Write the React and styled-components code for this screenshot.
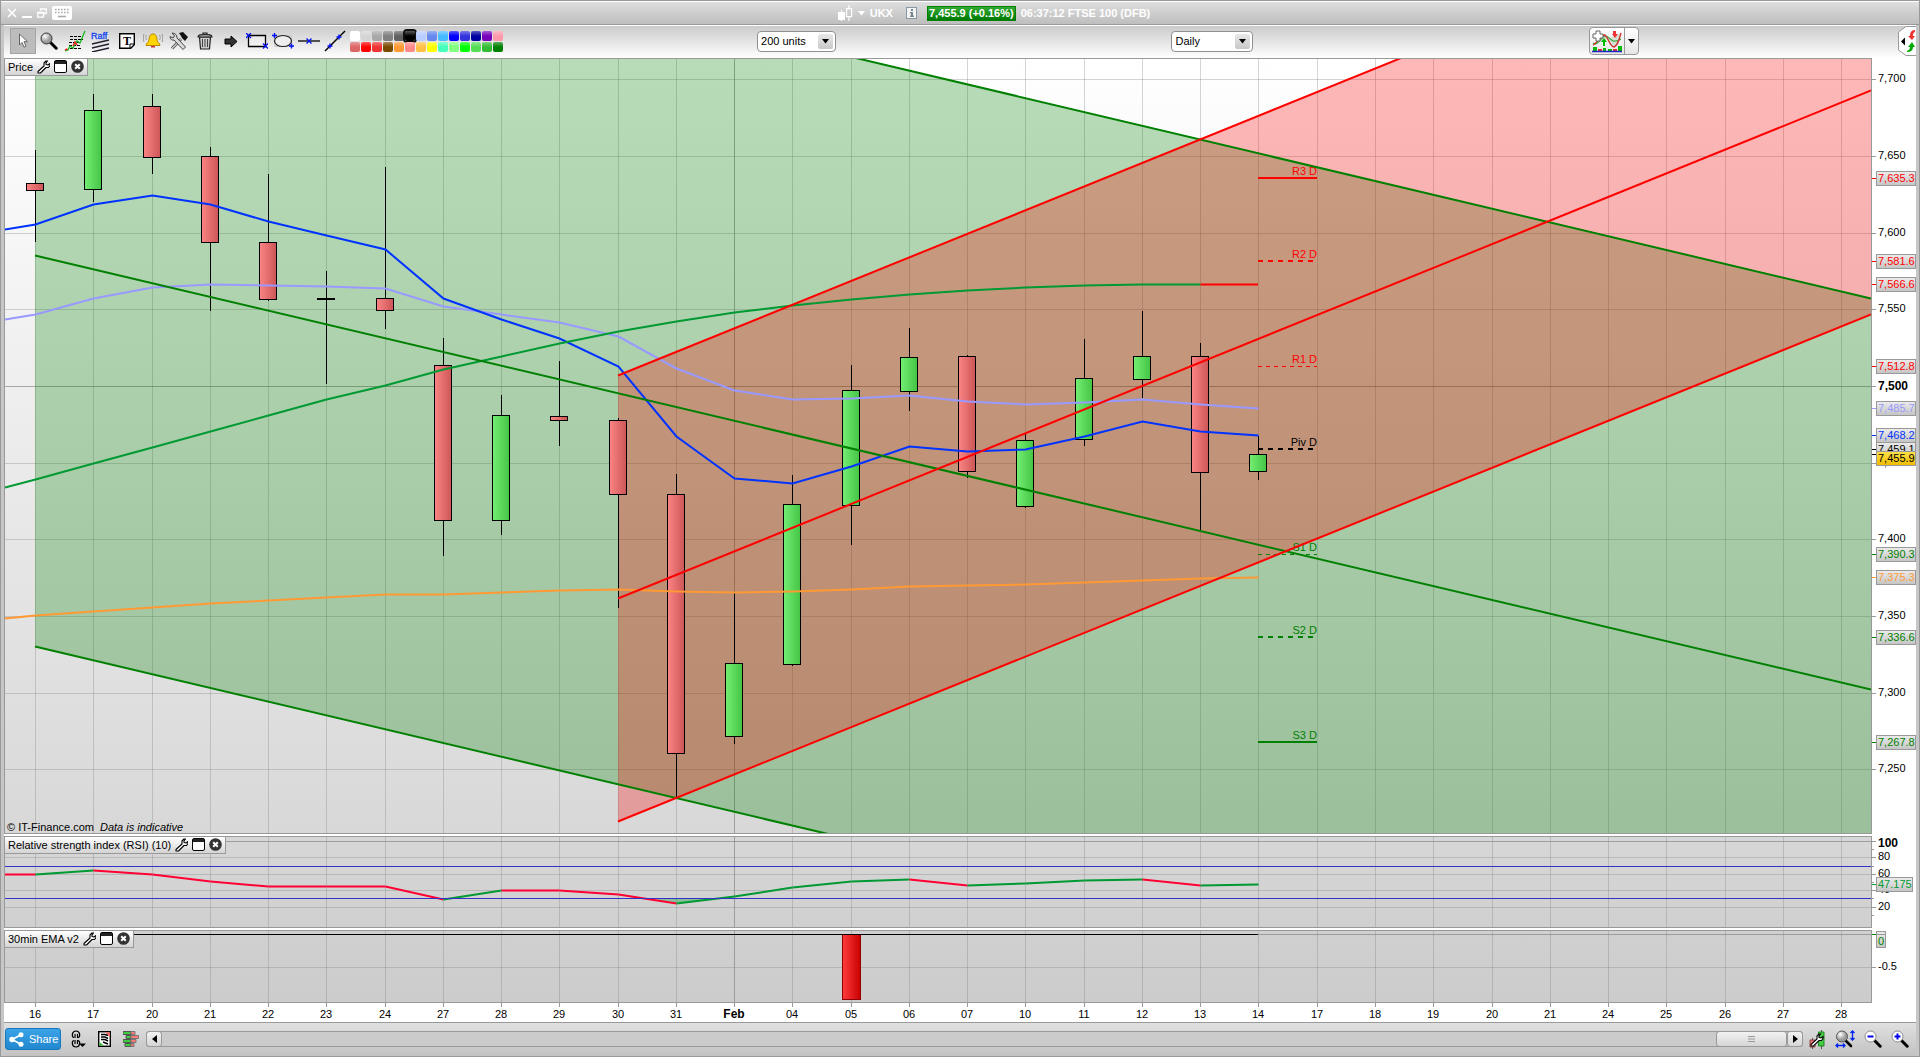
import React, { useLayoutEffect, useRef, useState } from "react";
import styled, { createGlobalStyle, css } from "styled-components";

const GlobalStyle = createGlobalStyle`
  * { box-sizing: border-box; }
  body {
    margin: 0;
    font-family: "Liberation Sans", Arial, Helvetica, sans-serif;
    font-size: 11px;
    color: #000;
  }
  button, select { font: inherit; color: inherit; }
`;

/* ---------- data ---------- */

const DAYS = [
  "16", "17", "20", "21", "22", "23", "24", "27", "28", "29", "30", "31", "Feb",
  "04", "05", "06", "07", "10", "11", "12", "13", "14", "17", "18", "19", "20",
  "21", "24", "25", "26", "27", "28",
];
const MONTH_START = 12;
const LAST_BAR = 21;

/* Vertical positions are kept on a 1057-high layout; each plot subtracts its own top. */
const PRICE = { top: 59, height: 774 };
const RSI = { top: 837, height: 90 };
const EMA = { top: 931, height: 71 };
const BASE_WIDTH = 1866;
const FIRST_DAY = 30;
const DAY_STEP = 58.26;

/* high, body top, body bottom, low, rising */
const CANDLES = [
  [150, 183, 191, 242, 0], [94, 110, 190, 202, 1], [94, 106, 158, 174, 0],
  [147, 156, 243, 311, 0], [174, 242, 300, 301, 0], [271, 298, 300, 384, 0],
  [167, 298, 311, 329, 0], [338, 365, 521, 556, 0], [395, 415, 521, 535, 1],
  [361, 416, 421, 446, 0], [418, 420, 495, 608, 0], [474, 494, 754, 798, 0],
  [593, 663, 737, 744, 1], [475, 504, 665, 666, 1], [365, 390, 506, 545, 1],
  [328, 357, 392, 411, 1], [355, 356, 472, 478, 0], [434, 440, 507, 508, 1],
  [339, 378, 440, 446, 1], [311, 356, 380, 398, 1], [343, 356, 473, 530, 0],
  [436, 454, 472, 480, 1],
];

/* The first value of every series sits on the left edge of the plot. */
const FAST_MA = [229, 224, 204, 195, 204, 221, 235, 249, 298, 319, 338, 366, 436, 478, 483, 466, 446, 451, 449, 436, 421, 431, 435];
const MID_MA = [319, 314, 298, 287, 284, 285, 286, 288, 306, 314, 322, 336, 368, 390, 399, 398, 395, 401, 404, 402, 399, 404, 408];
const SLOW_MA = [487, 479, 463, 447, 431, 415, 399, 385, 369, 356, 343, 331, 321, 312, 305, 299, 294, 290, 287, 285, 284, 284];
const LONG_MA = [618, 615, 611, 607, 603, 600, 597, 594, 594, 592, 590, 589, 591, 592, 591, 589, 586, 585, 584, 582, 580, 578, 577];
const RSI_LINE = [874, 874, 870, 874, 881, 886, 886, 886, 899, 890, 890, 894, 903, 896, 887, 881, 879, 885, 883, 880, 879, 885, 884];

const PRICE_GRID = [
  ["7,700", 79], ["7,650", 156], ["7,600", 233], ["7,550", 309], ["7,500", 386],
  ["7,450", 463], ["7,400", 539], ["7,350", 616], ["7,300", 693], ["7,250", 769],
];

const PIVOTS = [
  ["R3 D", 178, "#f00", 2, null], ["R2 D", 261, "#f00", 2, "5 5"],
  ["R1 D", 366, "#f00", 1, "4 4"], ["Piv D", 449, "#000", 2, "5 5"],
  ["S1 D", 554, "#008000", 1, "4 4"], ["S2 D", 637, "#008000", 2, "5 5"],
  ["S3 D", 742, "#008000", 2, null],
];

/* text, tick position, colour, box centre */
const TAGS = [
  ["7,635.3", 178, "#f00"], ["7,581.6", 261, "#f00"], ["7,566.6", 284, "#f00"],
  ["7,512.8", 366, "#f00"], ["7,485.7", 408, "#9999ff"], ["7,468.2", 435, "#0033ff"],
  ["7,459.1", 449, "#000"], ["7,455.9", 454, "#000", 458, "url(#gold)"],
  ["7,390.3", 554, "#008000"], ["7,375.3", 577, "#ff9933"],
  ["7,336.6", 637, "#008000"], ["7,267.8", 742, "#008000"],
];

const PALETTE = [
  "#ffffff", "#d4d4d4", "#a8a8a8", "#808080", "#606060", "#000000", "#b8ccff",
  "#6688ee", "#44bbff", "#0000ff", "#3333dd", "#0000a0", "#7700bb", "#ff99aa",
  "#dd6666", "#ff0000", "#ee3333", "#7a4a00", "#ff9933", "#ff8888", "#ffc044",
  "#ffff00", "#44ffbb", "#80ff80", "#00ff00", "#55dd55", "#33bb33", "#008000",
];

/* ---------- frame ---------- */

const Window = styled.div`
  display: flex;
  flex-direction: column;
  height: 100vh;
  border: 1px solid #999;
  background: #c6c6c6;
`;

const TitleBar = styled.header`
  display: flex;
  align-items: center;
  flex: 0 0 24px;
  padding: 0 3px 0 6px;
  border-top: 1px solid #fff;
  border-bottom: 1px solid #999;
  background: linear-gradient(#dedede, #bebebe);
  color: #fff;
  font-weight: bold;
`;

const WindowControls = styled.div`
  display: flex;
  align-items: center;
  gap: 5px;
`;

const PlainButton = styled.button`
  display: flex;
  align-items: center;
  justify-content: center;
  padding: 0;
  border: 0;
  background: none;
`;

const Spacer = styled.div`
  flex: ${(p) => p.$grow} 1 0;
`;

const Quote = styled.div`
  display: flex;
  align-items: center;
  white-space: nowrap;
`;

const SymbolMenu = styled(PlainButton)`
  margin-left: 4px;
`;

const Symbol = styled.span`
  margin: 0 13px 0 5px;
`;

const QuoteChange = styled.span`
  margin: 0 5px 0 10px;
  padding: 0 1px;
  border: 1px solid #008000;
  background: linear-gradient(#33aa33, #007a00);
  line-height: 13px;
`;

const Inner = styled.div`
  display: flex;
  flex: 1;
  flex-direction: column;
  min-height: 0;
  margin: 0 3px;
  background: #fff;
`;

/* ---------- toolbar ---------- */

const Toolbar = styled.div`
  display: flex;
  align-items: center;
  flex: none;
  height: 33px;
  padding: 0 0 2px 6px;
  border-top: 1px solid #fff;
  background: linear-gradient(#cbcbcb, #fff);
`;

const Tools = styled.div`
  display: flex;
`;

const ToolButton = styled(PlainButton)`
  width: 26px;
  height: 26px;
  ${(p) =>
    p.$active &&
    css`
      border: 1px solid #a4a4a4;
      background: #bcbcbc;
    `}
`;

const Palette = styled.div`
  display: grid;
  grid-template-columns: repeat(14, 10px);
  gap: 1px;
  margin-left: 2px;
`;

const Swatch = styled.button`
  height: 10px;
  padding: 0;
  border: 0;
  border-radius: 2px;
  background: linear-gradient(rgba(255, 255, 255, 0.35), rgba(255, 255, 255, 0) 50%), ${(p) => p.$color};
  ${(p) => p.$selected && css`outline: 2px solid #111;`}
`;

const SelectBox = styled.label`
  position: relative;
  width: ${(p) => p.$width}px;
`;

const Select = styled.select`
  display: block;
  width: 100%;
  height: 21px;
  padding: 0 3px;
  border: 1px solid #909090;
  border-radius: 4px;
  background: #fff;
  appearance: none;
`;

const SelectArrow = styled.span`
  position: absolute;
  top: 3px;
  right: 3px;
  display: flex;
  align-items: center;
  justify-content: center;
  width: 15px;
  height: 15px;
  border-radius: 2px;
  background: linear-gradient(#e8e8e8, #c8c8c8);
  pointer-events: none;
`;

const SplitButton = styled.div`
  display: flex;
  height: 28px;
  border: 1px solid #999;
  border-radius: 4px;
  background: linear-gradient(#fff, #e6e6e6);
`;

const SplitMain = styled(PlainButton)`
  width: 34px;
`;

const SplitArrow = styled(PlainButton)`
  width: 14px;
  border-left: 1px solid #999;
`;

const SideTab = styled(PlainButton)`
  width: 18px;
  height: 30px;
`;

/* ---------- panels ---------- */

const Charts = styled.main`
  display: flex;
  flex: 1;
  flex-direction: column;
  gap: 2px;
  min-height: 0;
`;

const PanelRow = styled.section`
  display: flex;
  flex: ${(p) => (p.$height ? `0 0 ${p.$height}px` : "1 1 0")};
  min-height: 0;
`;

const PlotBox = styled.div`
  position: relative;
  flex: 1;
  min-width: 0;
  border: 1px solid #999;
  background: linear-gradient(${(p) => p.$from}, ${(p) => p.$to});
  overflow: hidden;
`;

const AxisBox = styled.div`
  flex: 0 0 44px;
  padding: 1px 0;
`;

const ChartSvg = styled.svg`
  display: block;
  width: 100%;
  height: 100%;
  overflow: visible;
`;

const Caption = styled.div`
  position: absolute;
  top: 0;
  left: 0;
  display: flex;
  align-items: center;
  gap: 4px;
  height: 17px;
  padding: 0 3px 1px;
  border: solid #999;
  border-width: 0 1px 1px 0;
  background: linear-gradient(#fff, #d4d4d4);
  white-space: nowrap;
`;

const Copyright = styled.div`
  position: absolute;
  bottom: 0;
  left: 2px;
  line-height: 12px;
`;

const Note = styled.em`
  margin-left: 6px;
`;

const DateAxis = styled.div`
  flex: none;
  height: 19px;
  margin-right: 44px;
  padding: 0 1px;
`;

/* ---------- footer ---------- */

const Footer = styled.footer`
  display: flex;
  align-items: center;
  flex: 0 0 34px;
  padding: 0 7px 1px 1px;
  border-top: 1px solid #999;
  background: linear-gradient(#e0e0e0, #c2c2c2);
`;

const ShareButton = styled.button`
  display: flex;
  align-items: center;
  gap: 5px;
  height: 22px;
  padding: 0 2px 0 3px;
  border: 1px solid #1878bb;
  border-radius: 3px;
  background: linear-gradient(#3ba3e8, #2187cf);
  color: #fff;
`;

const FooterTools = styled.div`
  display: flex;
  align-items: center;
  gap: ${(p) => p.$gap}px;
  padding: 0 7px 0 ${(p) => p.$left}px;
`;

const ScrollBar = styled.div`
  display: flex;
  flex: 1;
  height: 16px;
  border: 1px solid #999;
  border-radius: 3px;
  background: #cbcbcb;
`;

const ScrollPart = styled(PlainButton)`
  width: ${(p) => p.$width}px;
  border-radius: 3px;
  background: linear-gradient(#f2f2f2, #d6d6d6);
  box-shadow: 0 0 0 1px #999;
`;

const ScrollThumb = styled(ScrollPart)`
  margin-right: 2px;
`;

const ZoomTools = styled.div`
  display: flex;
  align-items: center;
  gap: 9px;
  padding-left: 6px;
`;

/* ---------- icons ---------- */

const Icon = ({ w, h = w, children, ...rest }) => (
  <svg width={w} height={h} viewBox={`0 0 ${w} ${h}`} aria-hidden="true" {...rest}>
    {children}
  </svg>
);

const DownArrow = ({ color = "#000" }) => (
  <Icon w={7} h={5}>
    <path d="M0 0h7L3.500 4.500z" fill={color} />
  </Icon>
);

const WRENCH = "M9 1l-2 2v3L1 11.500V13h2.500L9 7.500h2.500l1.500-2V3.500L11 5 9 4.500V3l1.500-2z";

const WrenchIcon = () => (
  <Icon w={13} h={14}>
    <path d={WRENCH} fill="#fff" stroke="#000" strokeWidth="1.100" strokeLinejoin="round" />
  </Icon>
);

const WindowIcon = () => (
  <Icon w={13}>
    <rect x=".5" y=".5" width="12" height="12" rx="1.500" fill="#fff" stroke="#000" />
    <path d="M1 1h11v3H1z" fill="#222" />
  </Icon>
);

const CloseIcon = () => (
  <Icon w={13}>
    <circle cx="6.500" cy="6.500" r="6.300" fill="#333" />
    <path d="M4.200 4.200l4.600 4.600M8.800 4.200L4.200 8.800" stroke="#fff" strokeWidth="2" />
  </Icon>
);

const Lens = ({ sign }) => (
  <Icon w={18}>
    <path d="M10 10l6.200 6.200" stroke="#000" strokeWidth="3" strokeLinecap="round" />
    <circle cx="6.500" cy="6.500" r="5.500" fill={sign ? "#fff" : "url(#lens)"} stroke={sign ? "#888" : "#333"} />
    {sign && <path d={sign} stroke="#0000ee" strokeWidth="2" />}
  </Icon>
);

const MARK = (x, y) => `M${x - 2.5} ${y - 2.5}l5 5M${x + 2.5} ${y - 2.5}l-5 5`;
const CROSS = (x, y) => `M${x - 2.5} ${y}h5M${x} ${y - 2.5}v5`;

const TOOL_ICONS = [
  ["Select", <Icon w={12} h={16} key="i"><path d="M2.500 1v11l2.500-2.500 2 4.700 2-1-2-4.500h3.500z" fill="#fff" stroke="#666" /></Icon>],
  ["Zoom", <Lens key="i" />],
  ["Studies", (
    <Icon w={22} key="i">
      <path d="M6 6.500h12M6 9.500h13M5 12.500h11M5 15.500h12M6 18.500h12" stroke="#000" strokeWidth="1.200" strokeDasharray="3 1" />
      <path d="M1 21l3-1 2-4 3 2 4-7 3 2 5-12" stroke="#11bb22" strokeWidth="1.300" fill="none" />
      <path d="M1 20l2.500-1M9 16l2-4 2 3" stroke="#e22" strokeWidth="1.500" fill="none" />
    </Icon>
  )],
  ["Raff", (
    <Icon w={20} h={22} key="i">
      <text x="0" y="9" fontSize="9" fill="#1144ee" stroke="#1144ee" strokeWidth=".3">Raff</text>
      <path d="M1 14l17-4M1 18l17-4M1 22l17-4" stroke="#223" strokeWidth="1.300" />
    </Icon>
  )],
  ["Text", (
    <Icon w={16} key="i">
      <path d="M.7.7h14.600v11l-3.600 3.600H.7z" fill="#fff" stroke="#000" strokeWidth="1.400" />
      <path d="M11 15v-4h4" fill="none" stroke="#000" />
      <text x="8" y="12" fontSize="12" fontWeight="bold" textAnchor="middle" fontFamily="Liberation Serif, serif">T</text>
    </Icon>
  )],
  ["Alert", (
    <Icon w={20} h={16} key="i">
      <path d="M10 1c-3 0-4 3-4 6 0 2-3 3-3 5.500h14C17 10 14 9 14 7c0-3-1-6-4-6z" fill="#ffd400" stroke="#b88600" />
      <path d="M8 13h4v1.500H8z" fill="#c33" />
      <path d="M3.500 2C2.500 4 2.500 5 3.500 7M1 1C0 4 0 6 1 9M16.500 2c1 2 1 3 0 5M19 1c1 3 1 5 0 8" stroke="#999" fill="none" />
    </Icon>
  )],
  ["Settings", (
    <Icon w={20} h={18} key="i">
      <path d="M3 16.500L12 7" stroke="#555" strokeWidth="3" />
      <path d="M3 16.500L12 7" stroke="#ccc" strokeWidth="1.200" />
      <path d="M3 1l2.500 3-1.500 2L1 4.500c0 3 2 4 4 3.500l9 9.500 2.500-2.500-8.500-9C8 3 6 1 3 1z" fill="#ddd" stroke="#444" />
      <path d="M10 1l4-1 5 5-3 4-3-3-1-2z" fill="#111" />
    </Icon>
  )],
  ["Delete", (
    <Icon w={16} h={18} key="i">
      <path d="M2.500 5h11l-1 12h-9z" fill="#ccc" stroke="#222" strokeWidth="1.200" />
      <path d="M1 5C1 2.500 4 2.500 8 2.500s7 0 7 2.500zM6 2V1h4v1" fill="#aaa" stroke="#222" strokeWidth="1.200" />
      <path d="M5.500 7v8M8 7v8M10.500 7v8" stroke="#444" />
    </Icon>
  )],
  ["Arrow", <Icon w={14} h={13} key="i"><path d="M1 4h6V1l6 5.500L7 12V9H1z" fill="#333" stroke="#000" /></Icon>],
  ["Rectangle", (
    <Icon w={22} h={16} key="i">
      <path d="M2.500 2.500h17v11h-17z" fill="#fff" fillOpacity=".4" stroke="#000" strokeWidth="1.300" />
      <path d={MARK(2.5, 2.5) + MARK(19.5, 13)} stroke="#0011ee" strokeWidth="1.300" />
    </Icon>
  )],
  ["Ellipse", (
    <Icon w={22} h={16} key="i">
      <path d="M2.500 2.500h17v11h-17z" fill="#ddd" stroke="#ccc" />
      <ellipse cx="11" cy="8" rx="8.500" ry="5.500" fill="#eee" stroke="#222" strokeWidth="1.200" />
      <path d={CROSS(2.5, 2.5) + CROSS(19.5, 13)} stroke="#0011ee" strokeWidth="1.400" />
    </Icon>
  )],
  ["Line", (
    <Icon w={22} h={8} key="i">
      <path d="M0 4h22" stroke="#000" strokeWidth="1.300" />
      <path d={MARK(11, 4)} stroke="#0011ee" strokeWidth="1.300" />
    </Icon>
  )],
  ["Segment", (
    <Icon w={22} key="i">
      <path d="M1 21L21 1" stroke="#000" strokeWidth="1.400" />
      <path d={CROSS(6, 16) + CROSS(15, 7)} stroke="#0011ee" strokeWidth="1.400" />
    </Icon>
  )],
];

const IndicatorIcon = () => (
  <Icon w={32} h={24}>
    <path d="M2 14c5 4 9-8 13-7s6 9 15 3" fill="none" stroke="#3a3" strokeWidth="1.200" />
    <path d="M2 16c4-1 6-10 12-10 4 4 5 12 9 12 4-2 5-7 7-14" fill="#7a7" fillOpacity=".25" stroke="#c33" strokeWidth="1.400" />
    <path d="M5 2h4v3h3v4H9v3H5V9H2V5h3z" fill="#fff" stroke="#666" />
    <path d="M12 17v-4h-2l3-4 3 4h-2v4z" fill="#0b0" />
    <path d="M22 2h3v3h2l-3 4-3-4h1z" fill="#e33" />
    <path d="M2 18h4v4H2zM12 19h3v3h-3zM17 20h4v2h-4zM27 17h4v5h-4z" fill="#0b0" />
    <path d="M7 20h4v2H7zM22 20h4v2h-4z" fill="#d33" />
    <path d="M1 22.500h30" stroke="#22c" strokeWidth="1.500" />
  </Icon>
);

const KeyboardIcon = () => (
  <Icon w={20} h={14}>
    <rect width="20" height="14" rx="2" fill="#fff" />
    <path d="M3 3.500h14M3 6.500h14" stroke="#aaa" strokeWidth="1.600" strokeDasharray="1.600 1.400" />
    <path d="M6 10.500h8" stroke="#aaa" strokeWidth="1.600" />
  </Icon>
);

/* ---------- chart helpers ---------- */

function useSize() {
  const ref = useRef(null);
  const [size, setSize] = useState({ w: 0, h: 0 });
  useLayoutEffect(() => {
    const measure = () => setSize({ w: ref.current.clientWidth, h: ref.current.clientHeight });
    measure();
    const observer = new ResizeObserver(measure);
    observer.observe(ref.current);
    return () => observer.disconnect();
  }, []);
  return [ref, size];
}

const dayX = (index, w) => Math.round(((FIRST_DAY + DAY_STEP * index) * w) / BASE_WIDTH);

const scaleY = (area, h) => (y) => Math.round(((y - area.top) * h) / area.height);

const seriesPoints = (values, w, y) =>
  values.map((v, i) => [i === 0 ? 0 : dayX(i - 1, w) + 0.5, y(v) + 0.5]);

const Series = ({ points, color }) => (
  <polyline points={points.join(" ")} fill="none" stroke={color} strokeWidth="2" />
);

const Grid = ({ w, h, rows, strongRow }) => (
  <g fill="#808080" shapeRendering="crispEdges">
    {DAYS.map((_, i) => (
      <rect key={i} x={dayX(i, w)} y="0" width="1" height={h} opacity={i === MONTH_START ? 0.65 : 0.33} />
    ))}
    {rows.map((row) => (
      <rect key={row} x="0" y={row} width={w} height="1" opacity={row === strongRow ? 0.65 : 0.33} />
    ))}
  </g>
);

const ChannelFill = ({ fromX, w, y, color, lines: [top, , bottom] }) => {
  const x = (fromX * w) / BASE_WIDTH;
  return (
    <path d={`M${x} ${y(top[0])}L${w} ${y(top[1])}V${y(bottom[1])}L${x} ${y(bottom[0])}Z`} fill={color} opacity=".28" />
  );
};

const ChannelLines = ({ fromX, w, y, color, lines }) => (
  <g stroke={color} strokeWidth="2">
    {lines.map(([a, b]) => (
      <line key={a} x1={(fromX * w) / BASE_WIDTH} y1={y(a) + 0.5} x2={w} y2={y(b) + 0.5} />
    ))}
  </g>
);

const GREEN_CHANNEL = { fromX: 30, color: "#008000", lines: [[-137, 298], [255, 689], [646, 1080]] };
const RED_CHANNEL = { fromX: 613, color: "#ff0000", lines: [[375, -133], [598, 90], [821, 314]] };

const Candle = ({ x, y, data: [high, top, bottom, low, up] }) => {
  const t = y(top);
  const b = y(bottom);
  return (
    <g shapeRendering="crispEdges">
      <rect x={x} y={y(high)} width="1" height={y(low) - y(high)} />
      {b - t < 3 ? (
        <rect x={x - 9} y={t} width="18" height={b - t} />
      ) : (
        <rect x={x - 8.5} y={t + 0.5} width="17" height={b - t - 1} fill={up ? "url(#up)" : "url(#down)"} stroke="#000" />
      )}
    </g>
  );
};

const Defs = () => (
  <defs>
    <linearGradient id="up"><stop offset="0" stopColor="#74ee74" /><stop offset="1" stopColor="#44c444" /></linearGradient>
    <linearGradient id="down"><stop offset="0" stopColor="#fb8484" /><stop offset="1" stopColor="#cc5555" /></linearGradient>
    <linearGradient id="loss"><stop offset="0" stopColor="#ff3c3c" /><stop offset="1" stopColor="#c80000" /></linearGradient>
    <linearGradient id="tag" x2="0" y2="1"><stop offset="0" stopColor="#ececec" /><stop offset="1" stopColor="#c4c4c4" /></linearGradient>
    <linearGradient id="gold" x2="0" y2="1"><stop offset="0" stopColor="#ffe14a" /><stop offset="1" stopColor="#f0bb00" /></linearGradient>
    <radialGradient id="lens" cx=".35" cy=".3"><stop offset="0" stopColor="#fff" /><stop offset="1" stopColor="#999" /></radialGradient>
  </defs>
);

const PanelCaption = ({ title }) => (
  <Caption>
    <span>{title}</span>
    <PlainButton aria-label={`${title} settings`}><WrenchIcon /></PlainButton>
    <PlainButton aria-label={`${title} window`}><WindowIcon /></PlainButton>
    <PlainButton aria-label={`Close ${title}`}><CloseIcon /></PlainButton>
  </Caption>
);

const AxisTag = ({ y, tickY = y, text, color, width = 39, fill = "url(#tag)" }) => (
  <g>
    <rect x="0" y={tickY} width="4" height="1" fill={color} />
    <rect x="4.500" y={y - 6.5} width={width} height="14" fill={fill} stroke="#999" />
    <text x="6" y={y + 4} fill={color}>{text}</text>
  </g>
);

/* ---------- panels ---------- */

function PricePanel() {
  const [ref, { w, h }] = useSize();
  const y = scaleY(PRICE, h);
  const slow = seriesPoints(SLOW_MA, w, y);
  const pivotStart = dayX(LAST_BAR, w);
  const pivotEnd = dayX(LAST_BAR + 1, w);
  return (
    <PanelRow>
      <PlotBox ref={ref} $from="#ffffff" $to="#d8d8d8">
        <ChartSvg role="img" aria-label="FTSE 100 daily price">
          <Defs />
          <Grid w={w} h={h} rows={PRICE_GRID.map(([, v]) => y(v))} strongRow={y(386)} />
          <ChannelFill w={w} y={y} {...GREEN_CHANNEL} />
          <ChannelFill w={w} y={y} {...RED_CHANNEL} />
          {CANDLES.map((c, i) => <Candle key={i} x={dayX(i, w)} y={y} data={c} />)}
          {PIVOTS.map(([label, v, color, width, dash]) => {
            const lineY = width === 2 ? y(v) : y(v) + 0.5;
            return (
              <g key={label}>
                <line x1={pivotStart} x2={pivotEnd} y1={lineY} y2={lineY} stroke={color} strokeWidth={width} strokeDasharray={dash || undefined} />
                <text x={pivotEnd} y={y(v) - 3} textAnchor="end" fill={color}>{label}</text>
              </g>
            );
          })}
          <Series points={seriesPoints(LONG_MA, w, y)} color="#ff9933" />
          <Series points={seriesPoints(MID_MA, w, y)} color="#9999ff" />
          <Series points={seriesPoints(FAST_MA, w, y)} color="#0033ff" />
          <Series points={slow} color="#009933" />
          <Series points={[slow[slow.length - 1], [pivotStart, y(284) + 0.5]]} color="#ff0000" />
          <ChannelLines w={w} y={y} {...GREEN_CHANNEL} />
          <ChannelLines w={w} y={y} {...RED_CHANNEL} />
        </ChartSvg>
        <PanelCaption title="Price" />
        <Copyright>© IT-Finance.com<Note>Data is indicative</Note></Copyright>
      </PlotBox>
      <AxisBox>
        <ChartSvg>
          {PRICE_GRID.map(([label, v]) => (
            <g key={label}>
              <rect y={y(v)} width="4" height="1" fill="#999" />
              {label === "7,500"
                ? <text x="6" y={y(v) + 4} fontSize="12" fontWeight="bold">{label}</text>
                : <text x="6" y={y(v) + 3}>{label}</text>}
            </g>
          ))}
          {TAGS.map(([text, tick, color, centre = tick, fill]) => (
            <AxisTag key={text} y={y(centre)} tickY={y(tick)} text={text} color={color} fill={fill} />
          ))}
        </ChartSvg>
      </AxisBox>
    </PanelRow>
  );
}

function RsiPanel() {
  const [ref, { w, h }] = useSize();
  const y = scaleY(RSI, h);
  const points = seriesPoints(RSI_LINE, w, y);
  const rows = [841, 857, 874, 890, 907];
  return (
    <PanelRow $height={92}>
      <PlotBox ref={ref} $from="#d7d7d7" $to="#d0d0d0">
        <ChartSvg role="img" aria-label="Relative strength index">
          <Grid w={w} h={h} rows={rows.map(y)} strongRow={y(841)} />
          <polygon points={`${dayX(10.6, w)},${y(899)} ${dayX(11, w)},${y(903)} ${dayX(11.7, w)},${y(899)}`} fill="#009933" opacity=".35" />
          {points.slice(1).map((p, i) => (
            <Series key={i} points={[points[i], p]} color={p[1] < points[i][1] ? "#009933" : "#ff0033"} />
          ))}
          <rect y={y(866)} width={w} height="1" fill="#3333cc" />
          <rect y={y(898)} width={w} height="1" fill="#3333cc" />
        </ChartSvg>
        <PanelCaption title="Relative strength index (RSI) (10)" />
      </PlotBox>
      <AxisBox>
        <ChartSvg>
          {rows.map((v) => <rect key={v} y={y(v)} width="4" height="1" fill="#999" />)}
          {[849, 866, 882, 898, 915].map((v) => <rect key={v} y={y(v)} width="2" height="1" fill="#999" />)}
          <text x="6" y={y(847)} fontSize="12" fontWeight="bold">100</text>
          <text x="6" y={y(860)}>80</text>
          <text x="6" y={y(877)}>60</text>
          <text x="6" y={y(893)}>40</text>
          <text x="6" y={y(910)}>20</text>
          <AxisTag y={y(884)} text="47.175" color="#009933" width={36} />
        </ChartSvg>
      </AxisBox>
    </PanelRow>
  );
}

function EmaPanel() {
  const [ref, { w, h }] = useSize();
  const y = scaleY(EMA, h);
  return (
    <PanelRow $height={73}>
      <PlotBox ref={ref} $from="#d0d0d0" $to="#cccccc">
        <ChartSvg role="img" aria-label="30min EMA v2">
          <Grid w={w} h={h} rows={[y(934), y(967)]} strongRow={y(934)} />
          <rect x={dayX(14, w) - 8.5} y={y(934) + 0.5} width="18" height={y(1000) - y(934) - 1} fill="url(#loss)" stroke="#900000" />
          <rect y={y(934)} width={dayX(LAST_BAR, w)} height="1" />
        </ChartSvg>
        <PanelCaption title="30min EMA v2" />
      </PlotBox>
      <AxisBox>
        <ChartSvg>
          <rect x="4.500" y={y(931) + 0.5} width="9" height="16" fill="url(#tag)" stroke="#999" />
          <rect y={y(934)} width="4" height="1" fill="#008000" />
          <rect x="4" y={y(934)} width="10" height="1" fill="#999" />
          <text x="6" y={y(945)} fill="#008000">0</text>
          <rect y={y(967)} width="4" height="1" fill="#999" />
          <text x="6" y={y(970)}>-0.5</text>
        </ChartSvg>
      </AxisBox>
    </PanelRow>
  );
}

function Dates() {
  const [ref, { w }] = useSize();
  const plotW = w - 2;
  return (
    <DateAxis ref={ref}>
      <ChartSvg>
        {DAYS.map((day, i) => (
          <g key={i}>
            <rect x={dayX(i, plotW)} width="1" height="4" fill="#999" />
            <text
              x={dayX(i, plotW)}
              y="15"
              textAnchor="middle"
              fontSize={i === MONTH_START ? 12 : 11}
              fontWeight={i === MONTH_START ? "bold" : "normal"}
            >
              {day}
            </text>
          </g>
        ))}
      </ChartSvg>
    </DateAxis>
  );
}

/* ---------- page ---------- */

const Dropdown = ({ label, width, options }) => (
  <SelectBox $width={width}>
    <Select aria-label={label}>
      {options.map((o) => <option key={o}>{o}</option>)}
    </Select>
    <SelectArrow><DownArrow /></SelectArrow>
  </SelectBox>
);

export default function App() {
  return (
    <Window>
      <GlobalStyle />
      <TitleBar>
        <WindowControls>
          <PlainButton aria-label="Close"><Icon w={10}><path d="M1 1l8 8M9 1L1 9" stroke="#fff" strokeWidth="1.600" /></Icon></PlainButton>
          <PlainButton aria-label="Minimise"><Icon w={10}><path d="M0 9h10" stroke="#fff" strokeWidth="2" /></Icon></PlainButton>
          <PlainButton aria-label="Restore">
            <Icon w={10}><path d="M3.500 3V.8h5.700v4.700H7M.8 4.500h5.700v4.700H.8zM.8 5h5.700M3.500 1.200h5.700" fill="none" stroke="#fff" strokeWidth="1.300" /></Icon>
          </PlainButton>
          <PlainButton aria-label="Keyboard"><KeyboardIcon /></PlainButton>
        </WindowControls>
        <Spacer $grow={1} />
        <Quote>
          <Icon w={16}>
            <path d="M0 7h7v8H0zM3 5h1v11H3z" fill="#fff" />
            <path d="M8.600 3.600h5v8h-5zM11 0v3.600M11 11.600V16" fill="none" stroke="#fff" strokeWidth="1.200" />
          </Icon>
          <SymbolMenu aria-label="Choose instrument"><DownArrow color="#fff" /></SymbolMenu>
          <Symbol>UKX</Symbol>
          <Icon w={11} h={12}>
            <rect x=".5" y=".5" width="10" height="11" fill="#f4f4f4" stroke="#8899a5" />
            <path d="M5 2h2v2H5zM4 5h3v3.500h1V10H4V8.500h1V6.500H4z" fill="#7a8890" />
          </Icon>
          <QuoteChange>7,455.9 (+0.16%)</QuoteChange>
          <span>06:37:12 FTSE 100 (DFB)</span>
        </Quote>
        <Spacer $grow={1} />
      </TitleBar>
      <Inner>
        <Toolbar>
          <Tools>
            {TOOL_ICONS.map(([name, icon], i) => (
              <ToolButton key={name} aria-label={name} $active={i === 0}>{icon}</ToolButton>
            ))}
          </Tools>
          <Palette>
            {PALETTE.map((c) => (
              <Swatch key={c} aria-label={`Colour ${c}`} $color={c} $selected={c === "#000000"} />
            ))}
          </Palette>
          <Spacer $grow={50} />
          <Dropdown label="History length" width={79} options={["200 units", "500 units", "1000 units"]} />
          <Spacer $grow={66} />
          <Dropdown label="Timeframe" width={82} options={["Daily", "Weekly", "Monthly"]} />
          <Spacer $grow={66} />
          <SplitButton>
            <SplitMain aria-label="Add indicator"><IndicatorIcon /></SplitMain>
            <SplitArrow aria-label="Indicator list"><DownArrow /></SplitArrow>
          </SplitButton>
          <Spacer $grow={51} />
          <SideTab aria-label="Open order panel">
            <Icon w={18} h={30}>
              <path d="M18 .5H8L.5 6v18L8 29.500h10" fill="#fff" stroke="#999" />
              <path d="M7 11.500v8l-4-4z" />
              <path d="M17 4c-4 0-5 3-5 6h-2l4 4 3-4h-2c0-2 0-3 2-4z" fill="#e33" />
              <path d="M9 26c4 0 6-2 6-5h2l-3-5-4 5h2c0 2-1 3-3 4z" fill="#0a0" />
            </Icon>
          </SideTab>
        </Toolbar>
        <Charts>
          <PricePanel />
          <RsiPanel />
          <EmaPanel />
        </Charts>
        <Dates />
        <Footer>
          <ShareButton>
            <Icon w={15} h={15}>
              <path d="M12 2.800L3 7.500l9 4.700" fill="none" stroke="#fff" strokeWidth="1.600" />
              <circle cx="3" cy="7.500" r="2.700" fill="#fff" /><circle cx="12" cy="2.800" r="2.500" fill="#fff" /><circle cx="12" cy="12.200" r="2.500" fill="#fff" />
            </Icon>
            Share
          </ShareButton>
          <FooterTools $gap={12} $left={10}>
            <PlainButton aria-label="Link charts">
              <Icon w={15} h={18}>
                <path d="M3 7.500C.5 7 .5 1 5 1s4.500 6 2 6.500M4 8V4M6.500 8V4M3 10.500c-2.500.5-2.500 6.500 2 6.500s4.500-6 2-6.500M4 10v4M6.500 10v4" fill="none" stroke="#000" strokeWidth="1.200" />
                <path d="M8 13.500h7L11.500 17z" />
              </Icon>
            </PlainButton>
            <PlainButton aria-label="Report">
              <Icon w={13} h={16}>
                <rect x=".7" y=".7" width="11.600" height="14.600" fill="#fff" stroke="#000" strokeWidth="1.400" />
                <path d="M7 1.400h5V6z" fill="#f66" /><path d="M1.400 11v3.600H6z" fill="#3b3" />
                <path d="M3 3.500h4l3 1M3 6h4l3 1.500M3 8.500h4l3 1.500M5 11l5 2" fill="none" stroke="#000" strokeWidth="1.400" />
              </Icon>
            </PlainButton>
            <PlainButton aria-label="Order book">
              <Icon w={16} h={16}>
                <path d="M0 .5h8v3H0zM3 4.500h5v3H3zM0 8.500h8v3H0zM2 12.500h6v3H2z" fill="#3ecb3e" stroke="#555" />
                <path d="M8 .5h4v3H8zM8 4.500h7.500v3H8zM8 8.500h5v3H8zM8 12.500h3v3H8z" fill="#f77" stroke="#777" />
              </Icon>
            </PlainButton>
          </FooterTools>
          <ScrollBar>
            <ScrollPart $width={14} aria-label="Scroll left"><Icon w={5} h={8}><path d="M5 0v8L0 4z" /></Icon></ScrollPart>
            <Spacer $grow={1} />
            <ScrollThumb $width={69} aria-label="Scroll position">
              <Icon w={7} h={6}><path d="M0 .5h7M0 3h7M0 5.500h7" stroke="#999" /></Icon>
            </ScrollThumb>
            <ScrollPart $width={14} aria-label="Scroll right"><Icon w={5} h={8}><path d="M0 0v8l5-4z" /></Icon></ScrollPart>
          </ScrollBar>
          <ZoomTools>
            <PlainButton aria-label="Candle settings">
              <Icon w={17} h={19}>
                <path d="M3.500 8v11M12.500 0v19" stroke="#555" />
                <path d="M1 10h5v7H1z" fill="#e77" stroke="#844" /><path d="M9.500 2h5.500v14H9.500z" fill="#4c4" stroke="#282" />
                <path d={WRENCH} transform="translate(1 3)" fill="#fff" stroke="#000" strokeWidth="1.100" />
              </Icon>
            </PlainButton>
            <PlainButton aria-label="Zoom to fit">
              <Icon w={20} h={18}>
                <path d="M10 10l6 6" stroke="#000" strokeWidth="2.600" strokeLinecap="round" />
                <circle cx="7" cy="6.500" r="5.500" fill="url(#lens)" stroke="#555" />
                <path d="M17.500 1v9M15.500 3l2-2 2 2M15.500 8l2 2 2-2M1 15.500h9M3 13.500l-2 2 2 2M8 13.500l2 2-2 2" fill="none" stroke="#0022ee" strokeWidth="1.300" />
              </Icon>
            </PlainButton>
            <PlainButton aria-label="Zoom out"><Lens sign="M3.500 6.500h6" /></PlainButton>
            <PlainButton aria-label="Zoom in"><Lens sign="M3.500 6.500h6M6.500 3.500v6" /></PlainButton>
          </ZoomTools>
        </Footer>
      </Inner>
    </Window>
  );
}
